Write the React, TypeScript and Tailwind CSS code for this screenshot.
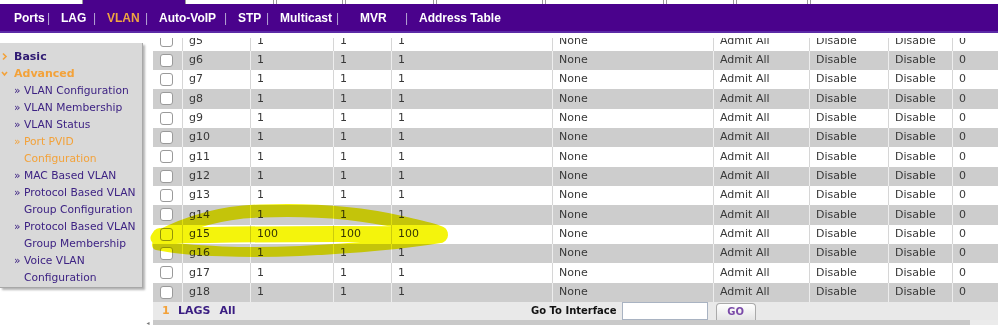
import React from 'react';

const menu = [
  { label: 'Ports', w: 'w-[33px]' },
  { label: 'LAG', w: 'w-[32px]' },
  { label: 'VLAN', w: 'w-[38px]', active: true },
  { label: 'Auto-VoIP', w: 'w-[65px]' },
  { label: 'STP', w: 'w-[28px]' },
  { label: 'Multicast', w: 'w-[56px]' },
  { label: 'MVR', w: 'w-[45px]', pre: 'w-[24px]' },
  { label: 'Address Table', w: 'w-[90px]' },
];

const tabs = ['w-[83px]', 'w-[89px]', 'w-[67px]', 'w-[89px]', 'w-[107px]', 'w-[119px]', 'w-[68px]', 'w-[72px]', 'w-[190px]'];

const cols = ['w-[29px]', 'w-[68px]', 'w-[83px]', 'w-[58px]', 'w-[161px]', 'w-[161px]', 'w-[96px]', 'w-[79px]', 'w-[64px]', 'w-[80px]'];

const ports = Array.from({ length: 14 }, (_, i) => `g${i + 5}`);

const navItems = [
  { lines: ['VLAN Configuration'] },
  { lines: ['VLAN Membership'] },
  { lines: ['VLAN Status'] },
  { lines: ['Port PVID', 'Configuration'], active: true },
  { lines: ['MAC Based VLAN'] },
  { lines: ['Protocol Based VLAN', 'Group Configuration'] },
  { lines: ['Protocol Based VLAN', 'Group Membership'] },
  { lines: ['Voice VLAN', 'Configuration'] },
];

function Checkbox() {
  return <div className="h-[13px] w-[13px] rounded-[3px] border border-[#9a9a9a] bg-white" />;
}

function Row({ port, gray }: { port: string; gray: boolean }) {
  const v = port === 'g15' ? '100' : '1';
  const cells = [port, v, v, v, 'None', 'Admit All', 'Disable', 'Disable', '0'];
  return (
    <div className={`flex h-[19.33px] ${gray ? 'bg-[#cdcdcd]' : 'bg-white'}`}>
      <div className={`${cols[0]} flex shrink-0 items-center pl-[7px]`}>
        <Checkbox />
      </div>
      {cells.map((c, i) => (
        <div
          key={i}
          className={`${cols[i + 1]} flex shrink-0 items-center border-l pl-[6px] ${
            gray ? 'border-[#ededed]' : 'border-[#d6d6d6]'
          }`}
        >
          {c}
        </div>
      ))}
    </div>
  );
}

export default function App() {
  return (
    <div className="relative h-[325px] w-[998px] overflow-hidden bg-white font-['DejaVu_Sans',Verdana,sans-serif]">
      {/* Tabs strip */}
      <div className="flex h-[4px]">
        <div className={`${tabs[0]} shrink-0 border-r border-[#9a9a9a] bg-white`} />
        <div className="w-[102px] shrink-0 bg-[#4a028c]" />
        {tabs.slice(1).map((w, i) => (
          <div key={i} className={`${w} mr-[2px] shrink-0 border-x border-[#9a9a9a] bg-white`} />
        ))}
      </div>

      {/* Menu bar */}
      <div className="flex h-[29px] items-center border-b-2 border-[#5b2aa6] bg-[#4a028c] pl-[14px] font-['Liberation_Sans',Arial,sans-serif] text-[12px] font-bold text-white">
        {menu.map((m, i) => (
          <React.Fragment key={m.label}>
            {i > 0 && (
              <span className={`${m.pre ?? 'w-[14px]'} shrink-0 font-normal text-[#b9a8d6]`}>|</span>
            )}
            <span className={`${m.w} shrink-0 whitespace-nowrap ${m.active ? 'text-[#f0a440]' : ''}`}>{m.label}</span>
          </React.Fragment>
        ))}
      </div>

      <div className="flex">
        {/* Sidebar */}
        <div className="w-[143px] shrink-0 pt-[10px]">
          <div className="h-[245px] border-r border-b border-[#a8a8a8] bg-[#d9d9d9] pt-[5px] text-[10.7px] leading-[17px] text-[#3d2283] shadow-[2px_2px_2px_#b5b5b5]">
            <div className="flex items-center">
              <svg width="14" height="17" viewBox="0 0 14 17" className="shrink-0">
                <path d="M3 5.5 L6 8.5 L3 11.5" fill="none" stroke="#f3a23a" strokeWidth="1.6" />
              </svg>
              <span className="text-[11px] font-bold text-[#2f1a72]">Basic</span>
            </div>
            <div className="flex items-center">
              <svg width="14" height="17" viewBox="0 0 14 17" className="shrink-0">
                <path d="M2 7 L4.5 10 L7 7" fill="none" stroke="#f3a23a" strokeWidth="1.6" />
              </svg>
              <span className="text-[11px] font-bold text-[#f3a23a]">Advanced</span>
            </div>
            {navItems.map((item) => (
              <div key={item.lines.join()} className={item.active ? 'text-[#f3a23a]' : ''}>
                {item.lines.map((line, j) => (
                  <div key={j} className="flex whitespace-nowrap pl-[14px]">
                    <span className="w-[10px] shrink-0">{j === 0 ? '»' : ''}</span>
                    <span>{line}</span>
                  </div>
                ))}
              </div>
            ))}
          </div>
        </div>

        {/* Main */}
        <div className="flex h-[292px] min-w-0 flex-1 flex-col overflow-hidden pt-[5px]">
          <div className="ml-[10px] flex-1 overflow-hidden">
            <div className="-mt-[6.7px] text-[11px] text-[#383838]">
              {ports.map((p, i) => (
                <Row key={p} port={p} gray={i % 2 === 1} />
              ))}
              <div className="flex h-[18px] items-center bg-[#e9e9e9] text-[11px] font-bold">
                <div className="flex w-[378px] shrink-0 items-center pl-[9px]">
                  <span className="w-[16px] text-[#f3a23a]">1</span>
                  <span className="text-[#3a1d82]">LAGS</span>
                  <span className="ml-[9px] text-[#3a1d82]">All</span>
                </div>
                <span className="whitespace-nowrap text-[10px] text-[#111]">Go To Interface</span>
                <div className="ml-[5px] h-[18px] w-[86px] shrink-0 self-end border border-[#a9b3c2] bg-white" />
                <div className="ml-[8px] flex h-[17px] w-[40px] shrink-0 items-center justify-center self-end rounded-t-[4px] border border-b-0 border-[#aaaaaa] bg-gradient-to-b from-white to-[#e4e4e4] text-[10px] text-[#7a4aa8]">
                  GO
                </div>
              </div>
            </div>
          </div>
          {/* Horizontal scrollbar */}
          <div className="flex h-[5px] shrink-0 items-center">
            <span className="w-[10px] text-center text-[6px] leading-[5px] text-[#777]">◂</span>
            <div className="h-full w-[817px] bg-[#c9c9c9]" />
            <div className="h-full flex-1 bg-[#ebebeb]" />
          </div>
        </div>
      </div>

      {/* Yellow marker scribble */}
      <svg
        className="pointer-events-none absolute inset-0 mix-blend-multiply"
        width="998"
        height="325"
        viewBox="0 0 998 325"
      >
        <g fill="none" stroke="#f4f40c" strokeLinecap="round">
          <path d="M157 238 C180 226 215 212 260 211 C310 209 360 213 400 222 C420 227 435 230 441 233" strokeWidth="13" />
          <path d="M160 236 C250 234 350 233 440 235" strokeWidth="16" />
          <path d="M157 245 C190 252 250 253 300 251 C360 248 410 243 440 238" strokeWidth="10" />
        </g>
      </svg>
    </div>
  );
}
